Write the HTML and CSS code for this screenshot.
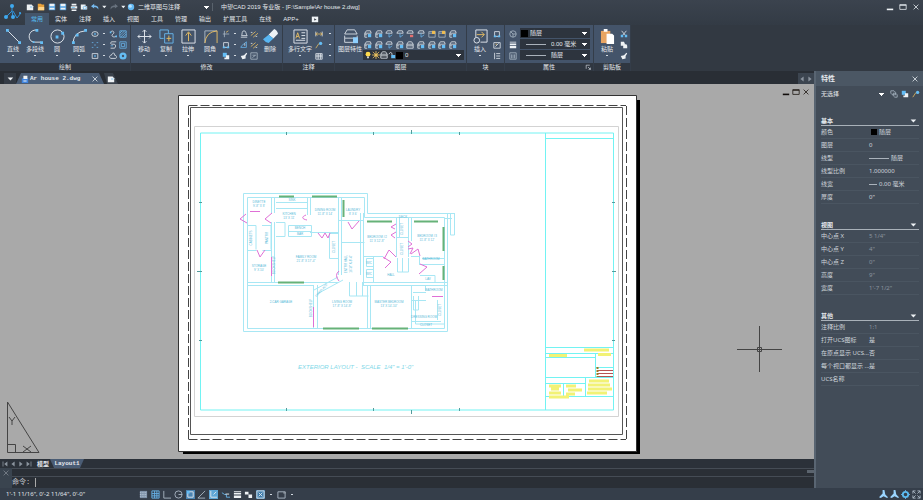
FILE: index.html
```html
<!DOCTYPE html>
<html lang="zh-CN">
<head>
<meta charset="utf-8">
<title>中望CAD 2019 专业版</title>
<link rel="stylesheet" href="styles.css">
</head>
<body>
<svg class="defs" aria-hidden="true">
  <symbol id="new" viewBox="0 0 10 10"><path class="wf" d="M1 2h6l2 2v5H1z"/><path class="bs" d="M5 5h3"/></symbol>
  <symbol id="open" viewBox="0 0 10 10"><path fill="#e9a23b" d="M1 1h4l1 1h3v7H1z"/><path fill="#ffd58a" d="M2 5h7v4H1z"/></symbol>
  <symbol id="save" viewBox="0 0 10 10"><path fill="#4f9fe0" d="M1 1h8v8H1z"/><path class="wf" d="M2 1h6v3H2zM2 6h6v2H2z"/></symbol>
  <symbol id="print" viewBox="0 0 10 10"><path class="wf" d="M2 1h6v2H2zM1 4h8v3H1zM2 8h6v2H2z"/><path class="bf" d="M2 5h4v1H2z"/></symbol>
  <symbol id="preview" viewBox="0 0 10 10"><path class="wf" d="M1 2h6v2h2v4H1z"/><circle class="bs" cx="6" cy="6" r="2"/></symbol>
  <symbol id="undo" viewBox="0 0 10 10"><path fill="#76baf0" d="M0 4l4-3v2c4 0 6 2 5 5C8 6 6 5 4 5v2z"/></symbol>
  <symbol id="redo" viewBox="0 0 10 10"><path fill="#68727e" d="M10 4L6 1v2C2 3 0 5 1 8c1-2 3-3 5-3v2z"/></symbol>
  <symbol id="gear" viewBox="0 0 10 10"><circle cx="5" cy="5" r="4" fill="#63b9f5"/><circle cx="4" cy="4" r="2" fill="#b4e2ff"/></symbol>
  <symbol id="tri" viewBox="0 0 10 10"><path class="wf" d="M2 3h7L5.500 7z"/></symbol>
  <symbol id="line" viewBox="0 0 16 16"><path class="ws" d="M2 2l12 12"/><path class="bf" d="M0 0h3v3H0zM13 13h3v3h-3z"/></symbol>
  <symbol id="pline" viewBox="0 0 16 16"><path class="ws" d="M9 1C-1 1-1 14 7 14h7"/><path class="bf" d="M8 0h3v3H8zM5 13h2v2H5zM13 13h3v3h-3z"/></symbol>
  <symbol id="circle" viewBox="0 0 16 16"><circle class="ws" cx="8" cy="8" r="7"/><path class="bf" d="M6 7h3v3H6zM12 3h3v3h-3z"/></symbol>
  <symbol id="arc" viewBox="0 0 16 16"><path class="ws" d="M1 15Q2 3 14 2"/><path class="bf" d="M0 13h3v3H0zM4 5h3v3H4zM13 0h3v3h-3z"/></symbol>
  <symbol id="ellipse" viewBox="0 0 10 10"><ellipse class="ws" cx="5" cy="5" rx="4" ry="3"/><path class="bf" d="M4 4h2v2H4z"/></symbol>
  <symbol id="spline" viewBox="0 0 10 10"><path class="ws" d="M2 3c2-4 6 0 3 2s0 5 4 3"/><path class="bf" d="M1 2h2v2H1zM8 7h2v2H8z"/></symbol>
  <symbol id="helix" viewBox="0 0 10 10"><path class="ws" d="M9 1H3Q1 3 3 4h4q3 2 0 5H2"/><path class="bs" d="M2 6h3"/></symbol>
  <symbol id="cloud" viewBox="0 0 10 10"><path class="ws" d="M2 8C-1 5 2 4 3 4c1-4 5-3 4 0 3 0 3 4 1 4z"/></symbol>
  <symbol id="hatch" viewBox="0 0 10 10"><path class="bs" d="M1 1h8v8H1zM1 4l3-3M1 7l6-6M2 9l7-7M5 9l4-4"/></symbol>
  <symbol id="region" viewBox="0 0 10 10"><path class="bs" d="M1 1h8v8H1zM3 3h4v4H3z"/></symbol>
  <symbol id="donut" viewBox="0 0 10 10"><circle cx="5" cy="5" r="3" fill="none" stroke="#65bdf4" stroke-width="3"/></symbol>
  <symbol id="point" viewBox="0 0 10 10"><path class="bs" d="M1 2h2M7 2h2M4 5h2M1 8h2M7 8h2"/></symbol>
  <symbol id="rect" viewBox="0 0 10 10"><path class="ws" d="M1.500 2h7v6h-7z"/><path class="bf" d="M4 4h2v2H4z"/></symbol>
  <symbol id="move" viewBox="0 0 16 16"><path class="ws" d="M8 1v14M1 8h14M6 3l2-2 2 2M6 13l2 2 2-2M3 6L1 8l2 2M13 6l2 2-2 2"/></symbol>
  <symbol id="copy" viewBox="0 0 16 16"><path class="bs" d="M5 10H1V1h9v4"/><path class="bs" d="M6 5h9v10H6z"/><path class="ys" d="M8 10h5M10.500 7v6"/></symbol>
  <symbol id="stretch" viewBox="0 0 16 16"><path class="ws" d="M1 1h14v14H1z"/><path class="ys" d="M8 13V4M5 7l3-4 3 4"/></symbol>
  <symbol id="fillet" viewBox="0 0 16 16"><path class="gs" d="M2 15V2h13"/><path class="ys" d="M2 15Q3 3 15 2v13"/></symbol>
  <symbol id="trim" viewBox="0 0 10 10"><path class="gs" d="M3 1v8M1 5h8"/><path class="ys" d="M5 3l3-2"/></symbol>
  <symbol id="mirror" viewBox="0 0 10 10"><path class="ws" d="M2 7c1-2 0-6 3-6s2 4 4 6zM1 9h8"/></symbol>
  <symbol id="break" viewBox="0 0 10 10"><path class="ys" d="M1 7l6-5M4 9l6-5"/><path class="ws" d="M1 3h2M7 8h2"/></symbol>
  <symbol id="array" viewBox="0 0 10 10"><path class="bf" d="M1 1h5v5H1z"/><path class="wf" d="M5 4h4v5H3V7h2z"/></symbol>
  <symbol id="offset" viewBox="0 0 10 10"><path class="bs" d="M1 8h7V1L2 6z"/><path class="ws" d="M6 3v3"/></symbol>
  <symbol id="explode" viewBox="0 0 10 10"><path class="gs" d="M1 1h8v8H1zM3 4h4M3 7l4-3"/></symbol>
  <symbol id="eraser" viewBox="0 0 16 16"><path class="wf" d="M8 4l4-4q3 1 4 5l-5 5-5-4z"/><path fill="#58b6f2" d="M6 6l5 4-5 5q-4-1-6-4z"/></symbol>
  <symbol id="mtext" viewBox="0 0 16 16"><path class="ws" d="M1 1h14v14H1zM9 4h4M9 7h4M9 10h4M3 12h10"/><path class="ys" d="M3 10l2-6 2 6M4 8h2"/></symbol>
  <symbol id="dim" viewBox="0 0 10 10"><path class="ws" d="M1 2v6M9 2v6"/><path class="ys" d="M1 5h8M3 3L1 5l2 2M7 3l2 2-2 2"/></symbol>
  <symbol id="leader" viewBox="0 0 10 10"><path class="ys" d="M1 9l4-6h4"/><circle class="bf" cx="7" cy="3" r="2"/></symbol>
  <symbol id="table" viewBox="0 0 10 10"><path class="ws" d="M1 2h8v7H1zM1 4h8M1 6h8M4 2v7M7 2v7"/></symbol>
  <symbol id="layers" viewBox="0 0 18 18"><path class="ws" d="M2 6l3-5h9l3 5zM2 8v3h15V8M2 11v5h15v-5"/><path fill="#8dd0ff" d="M12 10h6v7h-6z"/></symbol>
  <symbol id="stack" viewBox="0 0 10 10"><path class="ws" d="M1 4l2-3h4l2 3zM1 4v2h8V4M1 6v3h8V6"/></symbol>
  <symbol id="lay-a" viewBox="0 0 10 10"><path class="ws" d="M1 4l2-3h5l1 3zM1 4v5h3M1 6h3"/><path class="bf" d="M5 5h4v4H5z"/></symbol>
  <symbol id="lay-b" viewBox="0 0 10 10"><path class="ws" d="M1 4l2-3h5l1 3z"/><path class="bs" d="M5 4v5l4-3"/></symbol>
  <symbol id="lay-r" viewBox="0 0 10 10"><path class="ws" d="M1 4l2-3h5l1 3z"/><path fill="#e27070" d="M5 6h4v3H5z"/></symbol>
  <symbol id="lay-y" viewBox="0 0 10 10"><path class="gs" d="M1 2h8v7H1zM1 4h5"/><path fill="#edbc52" d="M5 1h4v4H5z"/></symbol>
  <symbol id="insert" viewBox="0 0 16 16"><path class="ws" d="M3 9V1h12v13H8"/><circle class="ws" cx="4" cy="12" r="3"/><path class="ys" d="M4 6h8M9 3l3 3-3 3"/></symbol>
  <symbol id="block" viewBox="0 0 10 10"><path class="ws" d="M2 2h6v6H2z"/><path class="bf" d="M1 7h3v2H1zM6 7h3v2H6z"/></symbol>
  <symbol id="editblock" viewBox="0 0 10 10"><path class="ws" d="M1 2h8v7H1zM3 7l4-4"/><path class="ys" d="M3 4h2"/></symbol>
  <symbol id="toggle" viewBox="0 0 10 10"><path class="gs" d="M1 1h4l2 2v3H3L1 4zM4 4h3l2 2v3H6L4 7z"/></symbol>
  <symbol id="attr" viewBox="0 0 10 10"><path class="ws" d="M2 1v8M4 2h5M4 5h5M4 8h5"/></symbol>
  <symbol id="colors" viewBox="0 0 10 10"><circle class="gs" cx="5" cy="5" r="4"/><path class="gs" d="M5 5L2 2M5 5h4M5 5v4"/></symbol>
  <symbol id="weights" viewBox="0 0 10 10"><path class="wf" d="M1 1h8v1H1zM1 3h8v2H1zM1 6h8v3H1z"/></symbol>
  <symbol id="types" viewBox="0 0 10 10"><path class="gs" d="M1 1h8v8H1zM3 3v5M5 3v5M7 3v5"/></symbol>
  <symbol id="paste" viewBox="0 0 16 16"><path fill="#e9a562" d="M1 2h10v13H1z"/><path fill="#fff" d="M4 0h4v3H4zM7 5h6l2 2v9H7z"/></symbol>
  <symbol id="cut" viewBox="0 0 10 10"><path class="ws" d="M2 1l5 6M8 1L3 7"/><path class="bf" d="M1 6h3v3H1zM6 6h3v3H6z"/></symbol>
  <symbol id="copyclip" viewBox="0 0 10 10"><path class="wf" d="M1 1h4l1 2v3H1zM4 4h4l1 2v3H4z"/></symbol>
  <symbol id="match" viewBox="0 0 10 10"><path class="wf" d="M8 1l1 1-2 3v3L3 9 1 5l4-1z"/></symbol>
  <symbol id="launch" viewBox="0 0 10 10"><path class="ws" d="M2 8V2h6M5 5l4 4M9 6v3H6"/></symbol>
  <symbol id="bulb" viewBox="0 0 10 10"><circle cx="5" cy="4" r="3" fill="#ffdb4d"/><path class="wf" d="M4 7h2v2H4z"/></symbol>
  <symbol id="sun" viewBox="0 0 10 10"><circle cx="5" cy="5" r="2" fill="#ffdb4d"/><path class="ys" d="M5 0v10M0 5h10M1 1l8 8M9 1L1 9"/></symbol>
  <symbol id="lock" viewBox="0 0 10 10"><path class="bf" d="M4 5h5v4H4z"/><path class="ws" d="M5 5V3Q3 0 1 4"/></symbol>
  <symbol id="film" viewBox="0 0 10 10"><path class="wf" d="M1 2h8v7H1z"/><path fill="#343b45" d="M4 4l3 2-3 1z"/></symbol>
  <symbol id="dwg" viewBox="0 0 10 10"><path fill="#3f84df" d="M1 4h8v6H1z"/><path class="wf" d="M3 1h5v4H3zM3 7h4v1H3z"/></symbol>
  <symbol id="x" viewBox="0 0 10 10"><path class="ws" d="M2 2l6 6M8 2L2 8"/></symbol>
  <symbol id="min" viewBox="0 0 10 10"><path class="wf" d="M1 7h8v2H1z"/></symbol>
  <symbol id="max" viewBox="0 0 10 10"><path class="ws" d="M1 2h8v6H1zM1 3h8"/></symbol>
  <symbol id="first" viewBox="0 0 10 10"><path class="gf" d="M2 2h1v6H2zM8 2v6L4 5z"/></symbol>
  <symbol id="prev" viewBox="0 0 10 10"><path class="gf" d="M7 2v6L3 5z"/></symbol>
  <symbol id="grid" viewBox="0 0 10 10"><path class="bs" d="M1 1h8v8H1zM1 4h8M1 6.500h8M4 1v8M6.500 1v8"/></symbol>
  <symbol id="snap" viewBox="0 0 10 10"><path fill="#8093aa" d="M1 1h8v8H1z"/><path stroke="#c0d0df" stroke-width="1" stroke-dasharray="1 1" d="M1 3h8M1 5h8M1 7h8"/></symbol>
  <symbol id="ortho" viewBox="0 0 10 10"><path class="gs" d="M2 1v8h8"/></symbol>
  <symbol id="polar" viewBox="0 0 10 10"><circle class="gs" cx="5" cy="5" r="4"/><path class="gs" d="M5 5h4"/></symbol>
  <symbol id="osnap" viewBox="0 0 10 10"><path fill="#4b84b2" d="M0 0h10v10H0z"/><path class="ws" d="M2 2h6v6H2z"/><path class="bf" d="M1 1h3v3H1z"/></symbol>
  <symbol id="angle" viewBox="0 0 10 10"><path class="gs" d="M9 1L1 9h8"/></symbol>
  <symbol id="ucs" viewBox="0 0 10 10"><path fill="#5ea6d7" d="M0 0h10v10H0z"/><path class="ws" d="M2 1v7h7M5 5l3-3"/></symbol>
  <symbol id="dyn" viewBox="0 0 10 10"><path class="bs" d="M1 3l3 2h2v3h4"/><path class="wf" d="M5 4h4v1H5z"/></symbol>
  <symbol id="cycle" viewBox="0 0 10 10"><path class="wf" d="M1 2h4v3H1zM5 5h4v4H5z"/></symbol>
  <symbol id="model" viewBox="0 0 10 10"><path fill="#407fae" d="M0 0h10v10H0z"/><path class="ws" d="M1 1h8v8H1zM3 3l4 4M7 3L3 7"/></symbol>
  <symbol id="screen" viewBox="0 0 10 10"><path class="gs" d="M1 2h8v7H1z"/><path class="gf" d="M7 2h3v2H7z"/></symbol>
  <symbol id="anno" viewBox="0 0 10 10"><path fill="#9bd5ff" d="M4 0h2l1 5 3 3-1 1-4-2-3 2-2-1 4-4z"/></symbol>
  <symbol id="cog" viewBox="0 0 10 10"><circle cx="5" cy="5" r="3" fill="none" stroke="#5bbcf2" stroke-width="2"/><path class="bs" d="M5 0v2M5 8v2M0 5h2M8 5h2"/></symbol>
  <symbol id="full" viewBox="0 0 10 10"><path class="gs" d="M1 4V1h3M6 1h3v3M9 6v3H6M4 9H1V6M1 1l3 3M9 1L6 4M9 9L6 6M1 9l3-3"/></symbol>
</svg>

<div class="app">
  <header class="top">
    <svg class="logo" viewBox="0 0 20 20" role="img" aria-label="ZWCAD"><path d="M10 4v5l-6 6M11 15l-1-6M11 9l4 7 4-5" fill="none" stroke="#2f93dc" stroke-width="1"/><circle cx="10" cy="4" r="2" fill="#3fa9ef"/><circle cx="4" cy="15" r="2" fill="#3fa9ef"/><circle cx="11" cy="15" r="2" fill="#3fa9ef"/><circle cx="18" cy="11" r="1" fill="#3fa9ef"/></svg>
    <div class="top-main">
      <div class="titlebar">
        <div class="quick">
          <button aria-label="新建"><svg><use href="#new"/></svg></button><button aria-label="打开"><svg><use href="#open"/></svg></button><button aria-label="保存"><svg><use href="#save"/></svg></button><button aria-label="另存为"><svg><use href="#save"/></svg></button><button aria-label="打印"><svg><use href="#print"/></svg></button><button aria-label="预览"><svg><use href="#preview"/></svg></button><button aria-label="放弃"><svg><use href="#undo"/></svg></button><button class="slim" aria-label="放弃列表"><svg><use href="#tri"/></svg></button><button aria-label="重做"><svg><use href="#redo"/></svg></button><button class="slim" aria-label="重做列表"><svg><use href="#tri"/></svg></button>
        </div>
        <svg><use href="#gear"/></svg>
        <select class="workspace" aria-label="工作空间"><option>二维草图与注释</option></select>
        <h1>中望CAD 2019 专业版 - [F:\Sample\Ar house 2.dwg]</h1>
        <div class="winctl"><button aria-label="最小化"><svg><use href="#min"/></svg></button><button aria-label="最大化"><svg><use href="#max"/></svg></button><button aria-label="关闭"><svg><use href="#x"/></svg></button></div>
      </div>
      <nav class="tabs">
        <button class="on">常用</button><button>实体</button><button>注释</button><button>插入</button><button>视图</button><button>工具</button><button>管理</button><button>输出</button><button>扩展工具</button><button>在线</button><button>APP+</button><button aria-label="视频"><svg><use href="#film"/></svg></button>
      </nav>
    </div>
  </header>

  <div class="ribbon">
    <section class="group draw">
      <div class="tools">
        <button class="big menu"><svg><use href="#line"/></svg>直线</button><button class="big menu"><svg><use href="#pline"/></svg>多段线</button><button class="big menu"><svg><use href="#circle"/></svg>圆</button><button class="big menu"><svg><use href="#arc"/></svg>圆弧</button>
        <div class="small four">
          <button aria-label="椭圆"><svg><use href="#ellipse"/></svg></button><i></i><button aria-label="样条曲线"><svg><use href="#spline"/></svg></button><button aria-label="填充"><svg><use href="#hatch"/></svg></button>
          <button aria-label="点"><svg><use href="#point"/></svg></button><i></i><button aria-label="螺旋"><svg><use href="#helix"/></svg></button><button aria-label="面域"><svg><use href="#region"/></svg></button>
          <button aria-label="矩形"><svg><use href="#rect"/></svg></button><i></i><button aria-label="云线"><svg><use href="#cloud"/></svg></button><button aria-label="圆环"><svg><use href="#donut"/></svg></button>
        </div>
      </div>
      <h2>绘制</h2>
    </section>
    <section class="group modify">
      <div class="tools">
        <button class="big menu"><svg><use href="#move"/></svg>移动</button><button class="big menu"><svg><use href="#copy"/></svg>复制</button><button class="big menu"><svg><use href="#stretch"/></svg>拉伸</button><button class="big menu"><svg><use href="#fillet"/></svg>圆角</button>
        <div class="small four">
          <button aria-label="修剪"><svg><use href="#trim"/></svg></button><i></i><button aria-label="镜像"><svg><use href="#mirror"/></svg></button><button aria-label="打断"><svg><use href="#break"/></svg></button>
          <button aria-label="缩放"><svg><use href="#block"/></svg></button><i></i><button aria-label="偏移"><svg><use href="#offset"/></svg></button><button aria-label="合并"><svg><use href="#break"/></svg></button>
          <button aria-label="阵列"><svg><use href="#array"/></svg></button><i></i><button aria-label="对齐"><svg><use href="#match"/></svg></button><button aria-label="分解"><svg><use href="#explode"/></svg></button>
        </div>
        <button class="big"><svg><use href="#eraser"/></svg>删除</button>
      </div>
      <h2>修改</h2>
    </section>
    <section class="group annotate">
      <div class="tools">
        <button class="big wide menu"><svg><use href="#mtext"/></svg>多行文字</button>
        <div class="small two">
          <button aria-label="标注"><svg><use href="#dim"/></svg></button><i></i>
          <button aria-label="引线"><svg><use href="#leader"/></svg></button><i></i>
          <button aria-label="表格"><svg><use href="#table"/></svg></button><i></i>
        </div>
      </div>
      <h2>注释</h2>
    </section>
    <section class="group layer">
      <div class="tools">
        <button class="big wide"><svg><use href="#layers"/></svg>图层特性</button>
        <div class="layer-side">
          <div class="layer-icons">
            <button aria-label="图层状态"><svg><use href="#lay-a"/></svg></button><button aria-label="图层隔离"><svg><use href="#lay-a"/></svg></button><button aria-label="上一个图层"><svg><use href="#lay-b"/></svg></button><button aria-label="图层匹配"><svg><use href="#lay-b"/></svg></button><button aria-label="冻结图层"><svg><use href="#lay-r"/></svg></button><button aria-label="图层漫游"><svg><use href="#lay-b"/></svg></button><button aria-label="锁定图层"><svg><use href="#lay-y"/></svg></button><button aria-label="解锁图层"><svg><use href="#lay-y"/></svg></button><button aria-label="合并图层"><svg><use href="#lay-a"/></svg></button>
            <button aria-label="当前图层"><svg><use href="#lay-a"/></svg></button><button aria-label="取消隔离"><svg><use href="#lay-a"/></svg></button><button aria-label="关闭图层"><svg><use href="#lay-b"/></svg></button><button aria-label="打开图层"><svg><use href="#lay-a"/></svg></button><button aria-label="解冻图层"><svg><use href="#stack"/></svg></button><button aria-label="视口冻结"><svg><use href="#lay-a"/></svg></button><button aria-label="复制到图层"><svg><use href="#lay-a"/></svg></button><button aria-label="更改图层"><svg><use href="#lay-a"/></svg></button><button aria-label="删除图层"><svg><use href="#lay-a"/></svg></button>
          </div>
          <div class="field"><svg><use href="#bulb"/></svg><svg><use href="#sun"/></svg><svg><use href="#stack"/></svg><svg><use href="#lock"/></svg><span class="swatch"></span><select aria-label="图层"><option>0</option></select></div>
        </div>
      </div>
      <h2>图层</h2>
    </section>
    <section class="group blocks">
      <div class="tools">
        <button class="big menu"><svg><use href="#insert"/></svg>插入</button>
        <div class="small one"><button aria-label="创建块"><svg><use href="#block"/></svg></button><button aria-label="编辑块"><svg><use href="#editblock"/></svg></button><button aria-label="属性"><svg><use href="#attr"/></svg></button></div>
      </div>
      <h2>块</h2>
    </section>
    <section class="group props">
      <div class="tools">
        <div class="small one"><svg><use href="#colors"/></svg><svg><use href="#weights"/></svg><svg><use href="#types"/></svg></div>
        <div class="fields">
          <div class="field"><span class="swatch"></span><select aria-label="颜色"><option>随层</option></select></div>
          <div class="field"><hr><select aria-label="线宽"><option>0.00 毫米</option></select></div>
          <div class="field"><hr><select aria-label="线型"><option>随层</option></select></div>
        </div>
      </div>
      <h2>属性<button aria-label="属性设置"><svg><use href="#launch"/></svg></button></h2>
    </section>
    <section class="group clip">
      <div class="tools">
        <button class="big menu"><svg><use href="#paste"/></svg>粘贴</button>
        <div class="small one"><button aria-label="剪切"><svg><use href="#cut"/></svg></button><button aria-label="复制"><svg><use href="#copyclip"/></svg></button><button aria-label="特性匹配"><svg><use href="#match"/></svg></button></div>
      </div>
      <h2>剪贴板</h2>
    </section>
  </div>

  <div class="work">
    <main class="doc">
      <div class="doctabs">
        <button class="list" aria-label="文档列表"><svg><use href="#tri"/></svg></button>
        <div class="doctab"><svg><use href="#dwg"/></svg><span>Ar house 2.dwg</span><button aria-label="关闭文档"><svg><use href="#x"/></svg></button></div>
        <button class="newtab" aria-label="新建文档"><svg><use href="#new"/></svg></button>
        <div class="scroll"><button aria-label="向左"><svg><use href="#prev"/></svg></button><button aria-label="向右"><svg class="flip"><use href="#prev"/></svg></button></div>
      </div>
      <div class="canvas">
        <svg viewBox="0 84 814 375" role="img" aria-label="Ar house 2 平面图">
          <path d="M183 100h457v354H183z" fill="#000"/>
          <path d="M178.500 95.500h458v356h-458z" fill="#fff" stroke="#333"/>
          <path d="M188.500 105.500H626M188.500 439.500H626M188.500 106v333M626.500 106v333" fill="none" stroke="#444" stroke-dasharray="9 3"/>
          <path d="M190.500 107.500h432v327h-432z" fill="none" stroke="#555"/>
          <path d="M194.500 126.500h424v290h-424z" fill="none" stroke="#d3d3d3"/>
          <g class="frame">
            <path d="M200.500 133h413v277h-413zM545.500 133v277M545.500 138.500h68M545.500 347.500h68M545.500 353.500h68M545.500 357.500h50M595.500 353v24M595.500 367.500h18M545.500 377.500h68M545.500 383.500h40M563.500 383v13M585.500 377v19M545.500 396.500h68"/>
          </g>
          <path class="ticks" d="M286.500 132v3M373.500 132v3M459.500 132v3M286.500 408v3M373.500 408v3M459.500 408v3M411.500 130v4M411.500 410v4M197 271.500h5M199 202.500h3M199 340.500h3M612 202.500h3M612 271.500h4M612 340.500h3"/>
          <g class="stamp">
            <path d="M584 350h25M549 355.500h18M598 354.500h13M549 386h12M551 389h8M549 393h12M566 386h10M568 390h14M566 394h9M589 381h20M588 385h22M588 389h24M587 393h20M549 397h20"/>
          </g>
          <path d="M597 370.500h16M597 373.500h16M597 376.500h16" stroke="#b75353"/><path d="M597.500 367v10" stroke="#9c7a20" stroke-width="2" stroke-dasharray="2 1"/>
          <g class="wall">
            <path d="M243.500 193.500h124v20h87M447.500 213v118.500h-204v-138M247.500 197.500h117v20h80v111h-197v-131"/>
            <path d="M271.500 197v16M274.500 197v16M307.500 197v18M310.500 197v18M338.500 197v78M341.500 197v78M247.500 250.500h9M262.500 250.500h9M271.500 222v60M274.500 222v60M247 282.500h67M247 285.500h67M310 232.500h28M313.500 285v43M317.500 285v43M274 282.500h64M314 290l24-13M317 294l26-14M341.500 242.500h23M360.500 213v62M363.500 213v72M338 220.500h26M363 256.500h20M373.500 256v26M363 282.500h84M363 285.500h84M367.500 285v43M370.500 285v43M396.500 217v40M399.500 217v20M408.500 217v40M411.500 217v24M396 237.500h12M411 256.500h8M419.500 256v8M419 264.500h25M397.500 258v14h11v-14M402.500 258v14M411.500 285v43M411 300.500h15M415.500 301v23h29M437.500 300v20M411 321.500h30M450.500 213v22h4v-22M444 218.500h8"/>
            <path d="M276 202.500h31M276 208.500h31M276 222.500h9v14h-9M288.500 225.500h23v11h-23zM288 231.500h23M247 225.500h9v24M262 225.500h9v24M329.500 233.500h9v25h-9zM349.500 282v14h19M356.500 282v14M362.500 282v14M366.500 258.500h7v8h-7zM366.500 269.500h7v8h-7zM413 292.500h13M413.500 296v14h5v-14M425.500 285v6M420 275.500h15v7M422 258.500h22"/>
          </g>
          <g class="windows"><path d="M279 196.500h15M312 196.500h25M343.500 200v17M278 282.500h26M323 328.500h36M372 328.500h36M367 221.500h25M414 221.500h24M443.500 227v24M443.500 266v14"/></g>
          <g class="doors"><path d="M250 211.500h10M246 214l-6 5 7 4M272 213l-7 6 6 4M257 250l3 7 5-7M271.500 257v19M318 233l4 5 3-5 3 5 2-5M306 215c-5 2-4 4 1 5M348 222l4 7 7-8M339 271q-5 4 0 10M313.500 307v20M396 224l-5 3 4 2M396 232l-5 3 4 3M384 259l5-9 7 7M383 257l8 5-6 6M408 241l4 3-4 3M408 249l5-1-3 6M411 254l7-5 2 7M419 274l8-7-7-3M432 296.500h11"/></g>
          <g class="labels">
            <text x="259" y="203">DINETTE</text><text x="259" y="207">9'-8" X 8'</text>
            <text x="289" y="215">KITCHEN</text><text x="289" y="219">13' X 11'</text>
            <text x="325" y="211">DINING ROOM</text><text x="325" y="215">11'-8" X 14'</text>
            <text x="353" y="211">LAUNDRY</text><text x="353" y="215">8' X 6'</text>
            <text x="300" y="229">BENCH</text><text x="300" y="235">BAR</text>
            <text x="306" y="258">FAMILY ROOM</text><text x="306" y="262">21'-8" X 17'-4"</text>
            <text x="259" y="267">STORAGE</text><text x="259" y="271">9' X 10'</text>
            <text x="281" y="303">2-CAR GARAGE</text>
            <text x="342" y="303">LIVING ROOM</text><text x="342" y="307">17'-8" X 14'-8"</text>
            <text x="377" y="238">BEDROOM #2</text><text x="377" y="242">11' X 12'-8"</text>
            <text x="427" y="237">BEDROOM #3</text><text x="427" y="241">11'-8" X 12'</text>
            <text x="389" y="303">MASTER BEDROOM</text><text x="389" y="307">13' X 14'-10"</text>
            <text x="391" y="276">HALL</text><text x="403" y="218">DECK</text>
            <text x="431" y="260">BATHROOM</text><text x="428" y="280">LAV</text><text x="434" y="291">BATHROOM</text><text x="424" y="318">DRESSING ROOM</text><text x="426" y="326">CLOSET</text>
            <text x="369" y="264">WIC</text><text x="369" y="275">WIC</text><text x="292" y="201">SINK</text>
            <text transform="translate(252 238) rotate(-90)">CABINETS</text><text transform="translate(268 238) rotate(-90)">PANTRY</text><text transform="translate(335 247) rotate(-90)">CLOSET</text><text transform="translate(347 264) rotate(-90)">ENTRY HALL</text><text transform="translate(352 264) rotate(-90)">16'-8" X 8'-4"</text><text transform="translate(403 229) rotate(-90)">CLOSET</text><text transform="translate(403 249) rotate(-90)">CLOSET</text><text transform="translate(275 265) rotate(-90)">BOOKSHELF</text><text transform="translate(312 308) rotate(-90)">BOOKSHELF</text><text transform="translate(322 291) rotate(-48)">FIREPLACE</text><text transform="translate(441 310) rotate(-90)">CLOSET</text>
          </g>
          <text class="caption" x="298" y="369" xml:space="preserve">EXTERIOR LAYOUT -  SCALE  1/4" = 1'-0"</text>
          <path class="ucs" d="M7.500 402v50.500h31.500zM7.500 444.500h8v8M9 417l3 4 3-4M12 421v4M23 446l8 6M31 446l-8 6"/>
          <path class="cross" d="M759.500 326v46M737 349.500h45M757.500 347.500h4v4h-4z"/>
        </svg>
        <div class="docctl"><button aria-label="最小化窗口"><svg><use href="#min"/></svg></button><button aria-label="还原窗口"><svg><use href="#max"/></svg></button><button aria-label="关闭窗口"><svg><use href="#x"/></svg></button></div>
      </div>
      <div class="layouts">
        <button aria-label="第一个"><svg><use href="#first"/></svg></button><button aria-label="上一个"><svg><use href="#prev"/></svg></button><button aria-label="下一个"><svg class="flip"><use href="#prev"/></svg></button><button aria-label="最后一个"><svg class="flip"><use href="#first"/></svg></button>
        <button class="sheet">模型</button><button class="sheet on">Layout1</button>
      </div>
      <div class="command">
        <button aria-label="关闭命令行"><svg><use href="#x"/></svg></button>
        <div class="lines"><div class="history"></div><div class="prompt"><label for="cmd">命令:</label><input id="cmd" type="text"></div></div>
      </div>
    </main>

    <aside class="panel">
      <div class="panel-head"><h2>特性</h2><button aria-label="关闭特性"><svg><use href="#x"/></svg></button></div>
      <div class="pick"><select aria-label="选择对象"><option>无选择</option></select><button aria-label="切换"><svg><use href="#toggle"/></svg></button><button aria-label="选择"><svg><use href="#array"/></svg></button><button aria-label="快速选择"><svg><use href="#leader"/></svg></button></div>
      <section><h3>基本<svg><use href="#tri"/></svg></h3>
        <table>
          <tr><th>颜色</th><td><span class="val"><span class="swatch"></span>随层</span></td></tr>
          <tr><th>图层</th><td>0</td></tr>
          <tr><th>线型</th><td><span class="val"><hr>随层</span></td></tr>
          <tr><th>线型比例</th><td>1.000000</td></tr>
          <tr><th>线宽</th><td><span class="val"><hr class="short">0.00 毫米</span></td></tr>
          <tr><th>厚度</th><td>0"</td></tr>
        </table>
      </section>
      <section class="dim"><h3>视图<svg><use href="#tri"/></svg></h3>
        <table>
          <tr><th>中心点 X</th><td>5 1/4"</td></tr>
          <tr><th>中心点 Y</th><td>4"</td></tr>
          <tr><th>中心点 Z</th><td>0"</td></tr>
          <tr><th>高度</th><td>9"</td></tr>
          <tr><th>宽度</th><td>1'-7 1/2"</td></tr>
        </table>
      </section>
      <section><h3>其他<svg><use href="#tri"/></svg></h3>
        <table>
          <tr class="dim"><th>注释比例</th><td>1:1</td></tr>
          <tr><th>打开UCS图标</th><td>是</td></tr>
          <tr><th>在原点显示 UCS...</th><td>否</td></tr>
          <tr><th>每个视口都显示 ...</th><td>是</td></tr>
          <tr><th>UCS名称</th><td></td></tr>
        </table>
      </section>
    </aside>
  </div>

  <footer class="status">
    <output>1'-1 11/16", 0'-2 11/64", 0'-0"</output>
    <div class="modes"><button aria-label="捕捉"><svg><use href="#snap"/></svg></button><button aria-label="栅格"><svg><use href="#grid"/></svg></button><button aria-label="正交"><svg><use href="#ortho"/></svg></button><button aria-label="极轴"><svg><use href="#polar"/></svg></button><button aria-label="对象捕捉"><svg><use href="#osnap"/></svg></button><button aria-label="对象追踪"><svg><use href="#angle"/></svg></button><button aria-label="动态UCS"><svg><use href="#ucs"/></svg></button><button aria-label="动态输入"><svg><use href="#dyn"/></svg></button><button aria-label="线宽显示"><svg><use href="#weights"/></svg></button><button aria-label="循环选择"><svg><use href="#cycle"/></svg></button><button aria-label="模型空间"><svg><use href="#model"/></svg></button></div>
    <i></i><button aria-label="视口"><svg><use href="#screen"/></svg></button><i></i>
    <div class="right"><button aria-label="注释可见性"><svg><use href="#anno"/></svg></button><button aria-label="自动缩放"><svg><use href="#anno"/></svg></button><button aria-label="设置"><svg><use href="#cog"/></svg></button><button aria-label="全屏"><svg><use href="#full"/></svg></button></div>
  </footer>
</div>
</body>
</html>
```
FILE: styles.css
```css
* { box-sizing: border-box; }
html, body { height: 100%; margin: 0; }
body {
  background: #323942;
  color: #e4e8ec;
  font: 6px/8px "Liberation Sans", "Noto Sans CJK SC", sans-serif;
  overflow: hidden;
}
h1, h2, h3 { margin: 0; font-size: 6px; font-weight: 400; }
button, select, input { font: inherit; color: inherit; background: none; border: 0; padding: 0; margin: 0; }
button { display: flex; align-items: center; justify-content: center; }
svg { display: block; flex: none; width: 8px; height: 8px; }
hr { flex: none; width: 20px; height: 1px; margin: 0; border: 0; background: #aab2bb; }
.defs { position: absolute; width: 0; height: 0; }
.ws { fill: none; stroke: #e2e8ee; stroke-width: 1; }
.bs { fill: none; stroke: #68b4ea; stroke-width: 1; }
.gs { fill: none; stroke: #aab7c4; stroke-width: 1; }
.ys { fill: none; stroke: #e6bd62; stroke-width: 1; }
.wf { fill: #eef2f5; }
.bf { fill: #64bdf5; }
.gf { fill: #8b949e; }
.flip { transform: scaleX(-1); }
select {
  appearance: none;
  flex: 1;
  min-width: 0;
  height: 8px;
  line-height: 8px;
  background: linear-gradient(#fff, #fff) right 3px top 3px / 5px 1px no-repeat, linear-gradient(#fff, #fff) right 4px top 4px / 3px 1px no-repeat, linear-gradient(#fff, #fff) right 5px top 5px / 1px 1px no-repeat;
}
.swatch { flex: none; width: 7px; height: 7px; background: #000; }

.app { display: flex; flex-direction: column; height: 100vh; }
.top { display: flex; height: 25px; background: linear-gradient(#3b434e, #333b45); }
.logo { width: 20px; height: 20px; margin: 2px 3px 0 2px; }
.top-main { flex: 1; }
.titlebar { display: flex; align-items: center; height: 13px; }
.quick { display: flex; width: 102px; }
.quick button { width: 11px; }
.quick .slim { width: 8px; }
.quick .slim svg { width: 6px; }
.workspace { flex: none; width: 74px; margin-left: 3px; }
.titlebar h1 { flex: 1; padding-left: 8px; border-left: 1px solid #59626c; }
.winctl { display: flex; gap: 5px; padding-right: 3px; }
.tabs { display: flex; height: 12px; }
.tabs button { padding: 0 6px; }
.tabs .on { background: #44556a; color: #56bdf4; }

.ribbon { display: flex; height: 46px; }
.group { display: flex; flex-direction: column; border-right: 1px solid #343d49; background: #44546a; }
.tools { display: flex; flex: 1; padding-left: 2px; }
.group h2 { display: flex; align-items: center; justify-content: center; position: relative; height: 8px; background: #303741; }
.group h2 button { position: absolute; right: 2px; }
.group h2 svg { width: 6px; height: 6px; }
.draw { width: 131px; }
.modify { width: 152px; }
.annotate { width: 52px; }
.annotate .tools { padding-left: 4px; }
.layer { width: 132px; }
.blocks { width: 38px; }
.props { width: 89px; }
.clip { width: 37px; }
.big { flex-direction: column; justify-content: flex-start; width: 22px; height: 34px; padding-top: 4px; white-space: nowrap; }
.big svg { width: 15px; height: 15px; margin-bottom: 1px; }
.big.wide { width: 26px; }
.menu::after, .small i, .status i { content: ""; width: 2px; height: 1px; background: #d2d9e0; place-self: center; }
.menu::after { margin-top: 2px; }
.small { display: grid; grid-template-rows: repeat(3, 11px); align-content: start; padding-top: 3px; justify-items: center; align-items: center; }
.four { grid-template-columns: 10px 8px 10px 10px; }
.two { grid-template-columns: 12px 9px; }
.one { grid-template-columns: 11px; }
.layer-side { display: flex; flex-direction: column; width: 101px; padding-top: 3px; }
.layer-icons { display: grid; grid-template-columns: repeat(9, 1fr); grid-auto-rows: 11px; width: 95px; }
.field { display: flex; align-items: center; height: 10px; padding-left: 1px; background: #2d343e; }
.layer .field svg { width: 8px; height: 8px; }
.field .swatch { margin-right: 2px; }
.fields { display: flex; flex-direction: column; flex: 1; gap: 1px; padding: 3px 3px 0 2px; }
.fields hr { margin: 0 5px; }

.work { display: flex; flex: 1; min-height: 0; }
.doc { display: flex; flex: 1; flex-direction: column; min-width: 0; }
.doctabs { display: flex; height: 13px; padding-top: 2px; background: #292e35; }
.list { width: 12px; margin-left: 4px; background: #343b45; }
.doctab { display: flex; align-items: center; gap: 1px; width: 88px; padding-left: 5px; background: #4a5c74; clip-path: polygon(5px 0, 83px 0, 100% 100%, 0 100%); font: bold 6px/8px "Liberation Mono", monospace; }
.doctab button { margin-left: auto; padding-right: 5px; }
.newtab { width: 14px; background: #3a424c; clip-path: polygon(0 0, 9px 0, 100% 100%, 3px 100%); }
.scroll { display: flex; margin-left: auto; background: #3c4550; }
.canvas { position: relative; flex: 1; min-height: 0; background: #a9a9a9; }
.canvas > svg { width: 100%; height: 100%; }
.docctl { position: absolute; top: 4px; right: 4px; display: flex; gap: 2px; }
.docctl svg { width: 8px; height: 8px; }
.docctl .ws { stroke: #222; }
.docctl svg { filter: invert(1); }
.frame path { fill: none; stroke: #72f3f3; }
.ticks { fill: none; stroke: #549b9b; }
.stamp path { stroke: #f2f276; stroke-width: 3; }
.wall path { fill: none; stroke: #a8e7f4; }
.windows path { fill: none; stroke: #66b278; stroke-width: 2; }
.doors path { fill: none; stroke: #df70d6; }
.labels text { fill: #57b9d7; font-size: 3px; text-anchor: middle; }
.caption { fill: #7fd8e8; font-size: 6px; font-style: italic; white-space: pre; }
.ucs, .cross { fill: none; stroke: #444; }

.layouts { display: flex; align-items: stretch; height: 9px; padding-left: 1px; background: #2b3139; }
.layouts > button { width: 8px; }
.layouts > button:nth-child(4) { margin-right: 3px; }
.layouts .sheet { width: 14px; font-weight: 700; }
.layouts .sheet.on { width: 34px; background: #4a5c74; clip-path: polygon(0 0, 100% 0, 30px 100%, 4px 100%); font-family: "Liberation Mono", monospace; }
.command { display: flex; height: 20px; background: #2a2f36; }
.command > button { align-items: flex-start; width: 12px; padding-top: 1px; background: #3a444f; }
.command > button svg { opacity: .4; }
.lines { flex: 1; border-top: 1px solid #454c55; }
.history { height: 8px; border-bottom: 1px solid #454c55; background: linear-gradient(#5b646e, #5b646e) right 0 top 1px / 7px 3px no-repeat; }
.prompt { display: flex; align-items: center; height: 10px; font: 7px/10px "Liberation Mono", "Noto Sans CJK SC", monospace; color: #c4c9cf; }
.prompt input { flex: 1; height: 9px; margin-left: 5px; border-left: 1px solid #aaa; outline: 0; }

.panel { width: 109px; padding-bottom: 4px; border-left: 2px solid #596572; background: #424c58; font-family: "Noto Sans", "Noto Sans CJK SC", sans-serif; }
.panel-head { display: flex; align-items: center; justify-content: space-between; height: 15px; padding: 0 4px 0 5px; background: #4b5764; }
.panel-head h2 { font-size: 7px; font-weight: 700; }
.pick { display: flex; align-items: center; gap: 3px; height: 15px; padding: 0 3px 0 5px; }
.panel section { margin: 15px 4px 0 5px; }
.panel section + section { margin-top: 16px; }
.panel h3 { display: flex; align-items: center; justify-content: space-between; height: 10px; padding-right: 2px; border-bottom: 1px solid #a9b1b9; font-weight: 700; }
.panel table { width: 100%; table-layout: fixed; border-collapse: separate; border-spacing: 0; }
.panel th, .panel td { height: 13px; padding: 0; border-bottom: 1px solid #4a5561; text-align: left; font-weight: 400; white-space: nowrap; color: #d0d6dc; }
.panel th { width: 48px; }
.panel .dim td { color: #8b949e; }
.val { display: flex; align-items: center; gap: 2px; }
.val .swatch { width: 6px; height: 6px; margin-left: 2px; }
.val .short { width: 8px; }

.status { display: flex; align-items: center; height: 12px; background: #353e4a; font-family: "Noto Sans", sans-serif; }
.status output { width: 133px; padding-left: 6px; }
.status svg { width: 9px; height: 9px; }
.modes { display: flex; justify-content: space-between; width: 126px; margin-left: 6px; }
.status i { margin: 0 5px; }
.right { display: flex; gap: 2px; margin-left: auto; padding-right: 2px; }
```
